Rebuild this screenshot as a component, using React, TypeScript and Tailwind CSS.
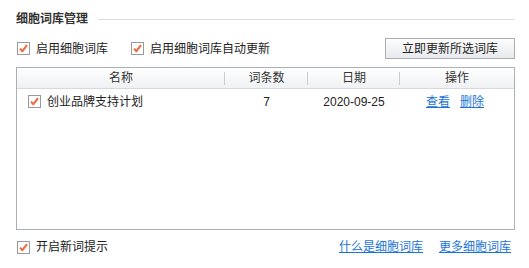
import React from 'react'

const font = { fontFamily: '"Liberation Sans", "Noto Sans CJK SC", sans-serif' }

function Check() {
  return (
    <span className="flex h-[13px] w-[13px] shrink-0 items-center justify-center border border-[#9a9a9a] bg-white">
      <svg width="9" height="9" viewBox="0 0 9 9">
        <path d="M1 4.6 L3.4 7.2 L8 1.2" fill="none" stroke="#f0693a" strokeWidth="2" strokeLinejoin="round" />
      </svg>
    </span>
  )
}

function CheckLabel({ label }: { label: string }) {
  return (
    <label className="flex items-center gap-[6px] text-[12px] text-[#222]">
      <Check />
      <span>{label}</span>
    </label>
  )
}

function HeaderCell({ children, className, sep = true }: { children: React.ReactNode; className: string; sep?: boolean }) {
  return (
    <div className={`relative flex items-center justify-center ${className}`}>
      {children}
      {sep && <span className="absolute right-0 top-[4px] h-[13px] w-px bg-[#c9cbce]" />}
    </div>
  )
}

export default function App() {
  return (
    <div className="h-[268px] w-[529px] bg-white pl-[16px] pr-[14px] pt-[10px] text-[#222]" style={font}>
      <div className="flex h-[18px] items-center gap-[10px]">
        <h2 className="text-[12px] font-bold text-[#333]">细胞词库管理</h2>
        <div className="h-px flex-1 bg-[#dcdcdc]" />
      </div>

      <div className="mt-[10px] flex h-[21px] items-center">
        <div className="ml-[1px] flex items-center gap-[23px]">
          <CheckLabel label="启用细胞词库" />
          <CheckLabel label="启用细胞词库自动更新" />
        </div>
        <button className="ml-auto flex h-[21px] w-[130px] items-center justify-center border border-[#a9aeb4] bg-gradient-to-b from-[#fdfdfd] to-[#e8eaed] text-[12px] text-[#222]">
          立即更新所选词库
        </button>
      </div>

      <div className="mt-[8px] h-[163px] border border-[#aab0b7]">
        <div className="flex h-[21px] border-b border-[#d7dadd] bg-gradient-to-b from-white to-[#f0f1f3] text-[12px] text-[#333]">
          <HeaderCell className="w-[208px]">名称</HeaderCell>
          <HeaderCell className="w-[83px]">词条数</HeaderCell>
          <HeaderCell className="w-[92px]">日期</HeaderCell>
          <HeaderCell className="flex-1" sep={false}>操作</HeaderCell>
        </div>
        <div className="flex h-[25px] items-center text-[12px] text-[#222]">
          <div className="flex w-[208px] items-center gap-[6px] pl-[11px]">
            <Check />
            <span>创业品牌支持计划</span>
          </div>
          <div className="w-[83px] text-center">7</div>
          <div className="w-[92px] text-center">2020-09-25</div>
          <div className="flex flex-1 items-center justify-center gap-[10px] pr-[4px]">
            <a className="cursor-pointer text-[#1a74d6] underline">查看</a>
            <a className="cursor-pointer text-[#1a74d6] underline">删除</a>
          </div>
        </div>
      </div>

      <div className="mt-[8px] flex h-[18px] items-center">
        <div className="ml-[1px]">
          <CheckLabel label="开启新词提示" />
        </div>
        <div className="ml-auto flex items-center gap-[16px] pr-[4px] text-[12px]">
          <a className="cursor-pointer text-[#1a74d6] underline">什么是细胞词库</a>
          <a className="cursor-pointer text-[#1a74d6] underline">更多细胞词库</a>
        </div>
      </div>
    </div>
  )
}
